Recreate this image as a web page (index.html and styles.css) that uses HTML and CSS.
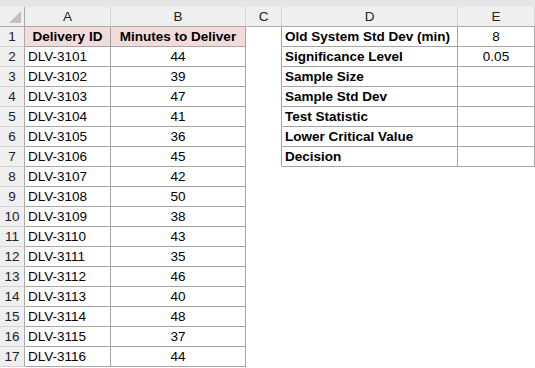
FILE: index.html
```html
<!DOCTYPE html>
<html>
<head>
<meta charset="utf-8">
<link rel="stylesheet" href="styles.css">
</head>
<body>
<div class="band"></div>
<div class="sheet">
  <div class="ch corner"><span class="tri"></span></div>
  <div class="ch">A</div>
  <div class="ch">B</div>
  <div class="ch">C</div>
  <div class="ch">D</div>
  <div class="ch last">E</div>

  <div class="rh">1</div><div class="c b hd">Delivery ID</div><div class="c b hd ctr">Minutes to Deliver</div><div class="c cl"></div><div class="c b lbl">Old System Std Dev (min)</div><div class="c b ctr">8</div>
  <div class="rh">2</div><div class="c b">DLV-3101</div><div class="c b ctr">44</div><div class="c cl"></div><div class="c b lbl">Significance Level</div><div class="c b ctr">0.05</div>
  <div class="rh">3</div><div class="c b">DLV-3102</div><div class="c b ctr">39</div><div class="c cl"></div><div class="c b lbl">Sample Size</div><div class="c b ctr"></div>
  <div class="rh">4</div><div class="c b">DLV-3103</div><div class="c b ctr">47</div><div class="c cl"></div><div class="c b lbl">Sample Std Dev</div><div class="c b ctr"></div>
  <div class="rh">5</div><div class="c b">DLV-3104</div><div class="c b ctr">41</div><div class="c cl"></div><div class="c b lbl">Test Statistic</div><div class="c b ctr"></div>
  <div class="rh">6</div><div class="c b">DLV-3105</div><div class="c b ctr">36</div><div class="c cl"></div><div class="c b lbl">Lower Critical Value</div><div class="c b ctr"></div>
  <div class="rh">7</div><div class="c b">DLV-3106</div><div class="c b ctr">45</div><div class="c cl"></div><div class="c b lbl">Decision</div><div class="c b ctr"></div>
  <div class="rh">8</div><div class="c b">DLV-3107</div><div class="c b ctr">42</div><div class="c"></div><div class="c"></div><div class="c"></div>
  <div class="rh">9</div><div class="c b">DLV-3108</div><div class="c b ctr">50</div><div class="c"></div><div class="c"></div><div class="c"></div>
  <div class="rh">10</div><div class="c b">DLV-3109</div><div class="c b ctr">38</div><div class="c"></div><div class="c"></div><div class="c"></div>
  <div class="rh">11</div><div class="c b">DLV-3110</div><div class="c b ctr">43</div><div class="c"></div><div class="c"></div><div class="c"></div>
  <div class="rh">12</div><div class="c b">DLV-3111</div><div class="c b ctr">35</div><div class="c"></div><div class="c"></div><div class="c"></div>
  <div class="rh">13</div><div class="c b">DLV-3112</div><div class="c b ctr">46</div><div class="c"></div><div class="c"></div><div class="c"></div>
  <div class="rh">14</div><div class="c b">DLV-3113</div><div class="c b ctr">40</div><div class="c"></div><div class="c"></div><div class="c"></div>
  <div class="rh">15</div><div class="c b">DLV-3114</div><div class="c b ctr">48</div><div class="c"></div><div class="c"></div><div class="c"></div>
  <div class="rh">16</div><div class="c b">DLV-3115</div><div class="c b ctr">37</div><div class="c"></div><div class="c"></div><div class="c"></div>
  <div class="rh">17</div><div class="c b">DLV-3116</div><div class="c b ctr">44</div><div class="c"></div><div class="c"></div><div class="c"></div>
</div>
</body>
</html>
```
FILE: styles.css
```css
* { box-sizing: border-box; }
html, body { margin: 0; padding: 0; background: #fff; }
body {
  font-family: "Liberation Sans", Arial, sans-serif;
  font-size: 13.5px;
  color: #000;
  width: 535px;
  height: 368px;
  overflow: hidden;
}
.band {
  height: 7px;
  background: #e6e6e6;
}
.sheet {
  display: grid;
  grid-template-columns: 25px 86px 135px 36px 176px 77px;
  grid-auto-rows: 20px;
}
.ch {
  background: #efefef;
  border-right: 1px solid #d4d4d4;
  border-bottom: 1px solid #ababab;
  display: flex;
  align-items: center;
  justify-content: center;
  color: #222;
  line-height: 1;
}
.ch.corner {
  position: relative;
  border-right-color: #ababab;
}
.tri {
  position: absolute;
  right: 3px;
  bottom: 3px;
  width: 0;
  height: 0;
  border-left: 12px solid transparent;
  border-bottom: 12px solid #c0c0c0;
}
.rh {
  background: #efefef;
  border-right: 1px solid #ababab;
  border-bottom: 1px solid #d4d4d4;
  display: flex;
  align-items: center;
  justify-content: center;
  color: #222;
}
.c {
  border-right: 1px solid #fff;
  border-bottom: 1px solid #fff;
  padding: 0 3px;
  display: flex;
  align-items: center;
  white-space: nowrap;
  overflow: hidden;
}
.c.b {
  border-right-color: #a6a6a6;
  border-bottom-color: #a6a6a6;
}
.c.cl {
  border-right-color: #a6a6a6;
}
.hd {
  background: #f2dcdb;
  font-weight: bold;
  justify-content: center;
}
.ctr { justify-content: center; }
.lbl { font-weight: bold; }
```
